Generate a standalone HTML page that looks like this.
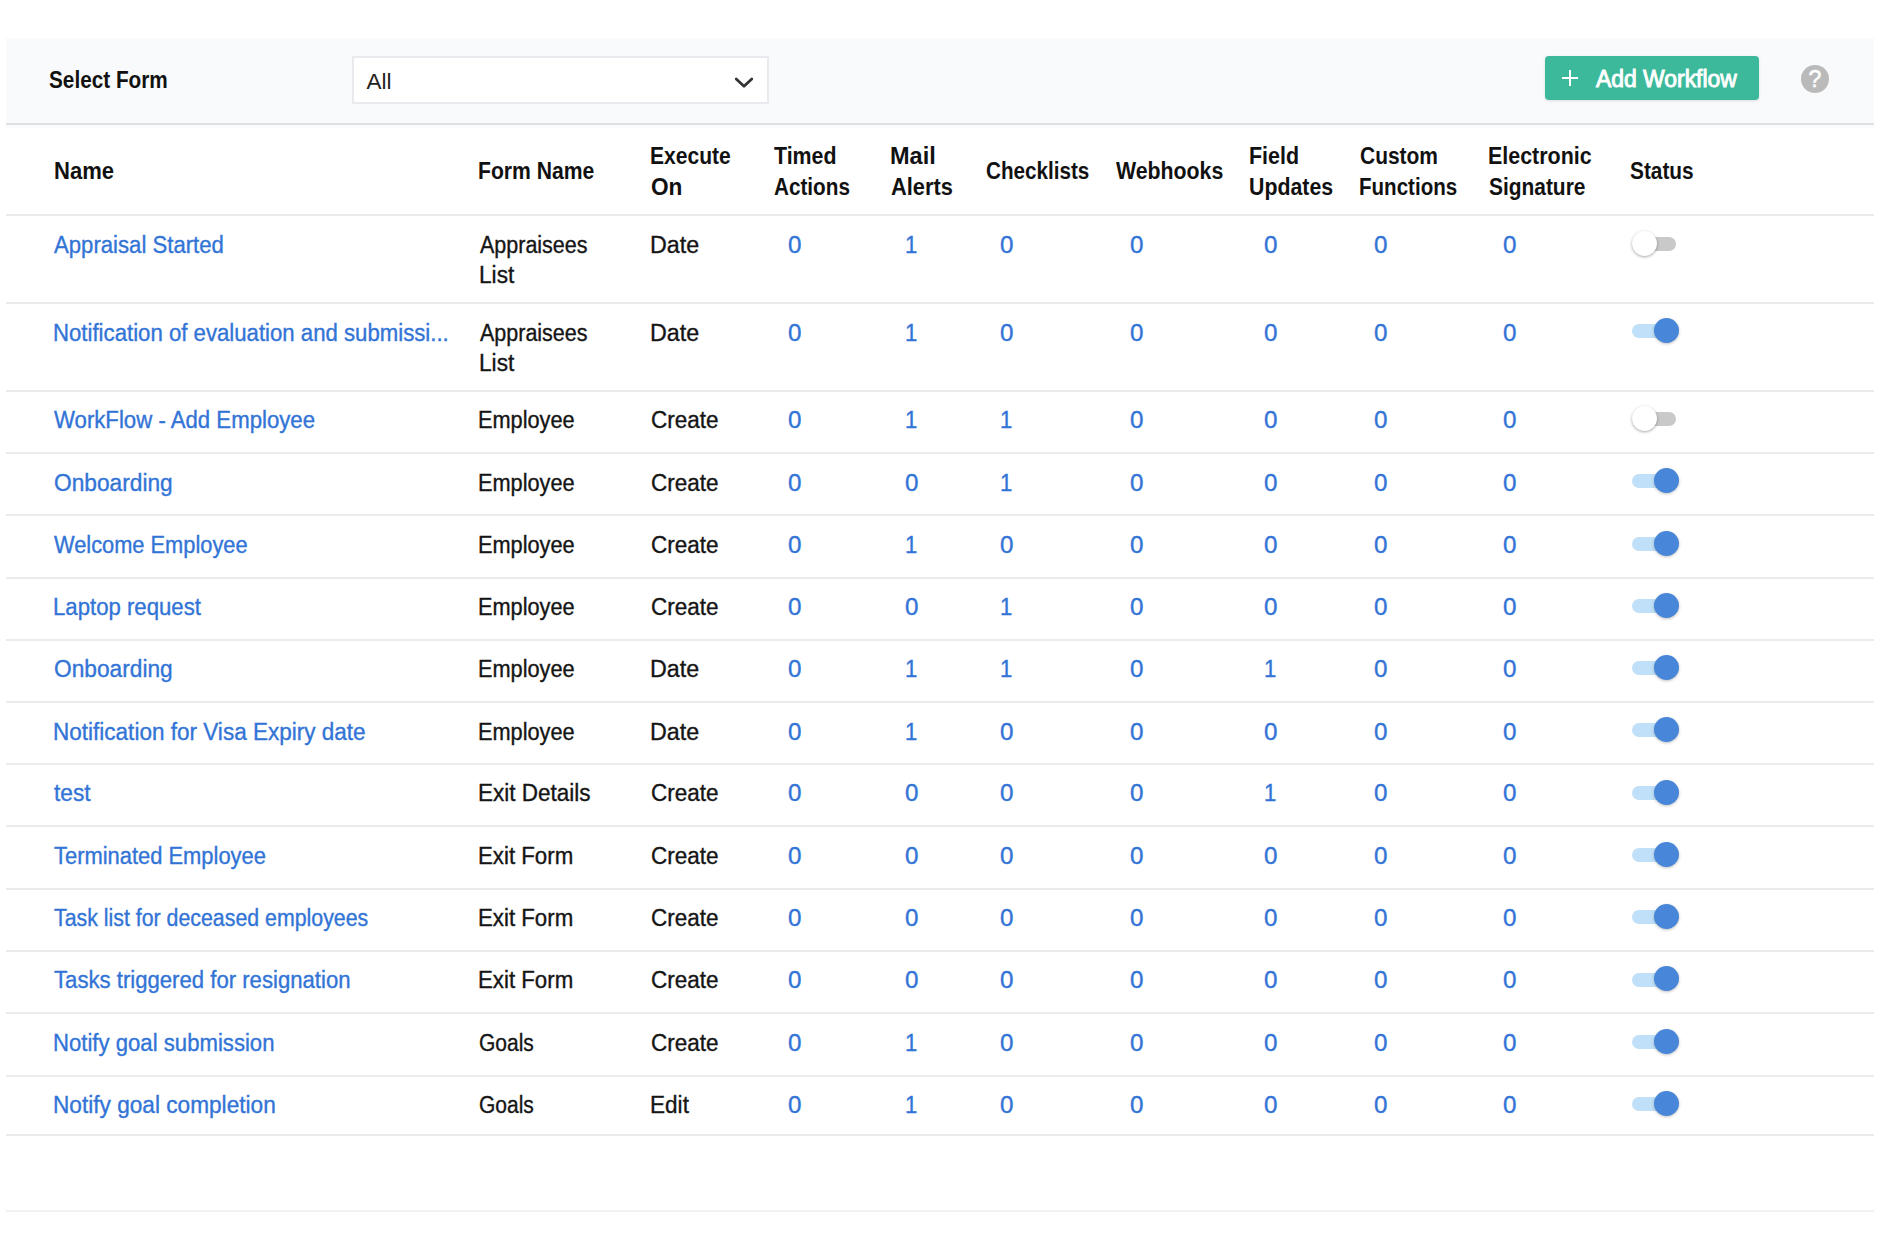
<!DOCTYPE html>
<html lang="en"><head><meta charset="utf-8"><title>Workflows</title>
<style>
html,body{margin:0;padding:0;background:#fff;}
body{width:1880px;height:1250px;position:relative;overflow:hidden;font-family:"Liberation Sans",Arial,sans-serif;font-size:23px;line-height:31px;color:#151515;}
.t{position:absolute;white-space:nowrap;transform-origin:0 0;line-height:31px;-webkit-text-stroke:0.35px currentColor;}
.b{font-weight:bold;color:#111;-webkit-text-stroke:0;}
.w{color:#fff;-webkit-text-stroke:0.9px #fff;}
a.t,.n{color:#3274d6;text-decoration:none;}
.bar{position:absolute;left:6px;top:38px;width:1868px;height:85px;background:#f9fafc;border-bottom:2px solid #e0e1e4;box-shadow:0 3px 0 #fafbfc;}
.sel{position:absolute;left:346px;top:18px;width:413px;height:44px;background:#fff;border:2px solid #e9eaed;}
.sel .v{position:absolute;left:12.5px;top:8px;font-size:22.5px;line-height:31px;color:#222;}
.sel svg{position:absolute;left:380px;top:19px;}
.btn{position:absolute;left:1539px;top:18px;width:214px;height:44px;border-radius:4px;background:#3cb99a;color:#fff;box-shadow:0 1px 3px rgba(0,0,0,.12);}
.btn svg{position:absolute;left:16px;top:13px;}
.help{position:absolute;left:1794.5px;top:26.7px;width:28.6px;height:28.6px;border-radius:50%;background:#bababa;color:#fff;font-size:23px;line-height:29px;text-align:center;-webkit-text-stroke:0.5px #fff;}
.tbl{position:absolute;left:6px;top:125px;width:1868px;}
.row{position:absolute;left:0;width:1868px;border-top:2px solid #ebebeb;box-sizing:border-box;}
.tg{position:absolute;left:1625.5px;width:44.5px;height:14px;border-radius:7px;background:#c9c9c9;}
.tg i{position:absolute;left:0;top:-6.2px;width:25px;height:25px;border-radius:50%;background:#fff;box-shadow:0 1px 3px rgba(0,0,0,.35);}
.tg.on{background:#bfe0f8;}
.tg.on i{left:22.5px;background:#4786d8;box-shadow:0 1px 3px rgba(0,0,0,.25);}
.foot{position:absolute;left:6px;top:1210px;width:1868px;height:2px;background:#f1f1f1;}
</style></head><body>

<div class="bar">
<span class="t b" style="left:43.00px;top:27.00px;transform:scaleX(0.9023)">Select Form</span>
<div class="sel"><span class="v">All</span><svg width="20" height="13" viewBox="0 0 20 13"><path d="M2.2 2 L10 9.3 L17.8 2" fill="none" stroke="#333" stroke-width="2.7" stroke-linecap="round" stroke-linejoin="round"/></svg></div>
<div class="btn"><svg width="18" height="18" viewBox="0 0 18 18"><path d="M9 1V17M1 9H17" stroke="#fff" stroke-width="2" fill="none"/></svg>
<span class="t w" style="left:51.00px;top:8.00px;transform:scaleX(0.9952)">Add Workflow</span>
</div>
<div class="help">?</div>
</div>
<div class="tbl">
<div class="hd">
<span class="t b" style="left:48.00px;top:31.00px;transform:scaleX(0.9591)">Name</span>
<span class="t b" style="left:472.00px;top:31.00px;transform:scaleX(0.9192)">Form Name</span>
<span class="t b" style="left:644.00px;top:16.00px;transform:scaleX(0.9162)">Execute</span>
<span class="t b" style="left:645.00px;top:47.00px;transform:scaleX(0.9833)">On</span>
<span class="t b" style="left:768.00px;top:16.00px;transform:scaleX(0.9289)">Timed</span>
<span class="t b" style="left:768.00px;top:47.00px;transform:scaleX(0.9000)">Actions</span>
<span class="t b" style="left:884.00px;top:16.00px;transform:scaleX(1.0216)">Mail</span>
<span class="t b" style="left:885.00px;top:47.00px;transform:scaleX(0.9485)">Alerts</span>
<span class="t b" style="left:980.00px;top:31.00px;transform:scaleX(0.8983)">Checklists</span>
<span class="t b" style="left:1110.00px;top:31.00px;transform:scaleX(0.9261)">Webhooks</span>
<span class="t b" style="left:1243.00px;top:16.00px;transform:scaleX(0.9315)">Field</span>
<span class="t b" style="left:1243.00px;top:47.00px;transform:scaleX(0.9270)">Updates</span>
<span class="t b" style="left:1354.00px;top:16.00px;transform:scaleX(0.9107)">Custom</span>
<span class="t b" style="left:1353.00px;top:47.00px;transform:scaleX(0.8935)">Functions</span>
<span class="t b" style="left:1482.00px;top:16.00px;transform:scaleX(0.9319)">Electronic</span>
<span class="t b" style="left:1483.00px;top:47.00px;transform:scaleX(0.9088)">Signature</span>
<span class="t b" style="left:1624.00px;top:31.00px;transform:scaleX(0.9058)">Status</span>
</div>
<div class="row" style="top:89.00px;height:88.00px">
<a class="t n" style="left:48.00px;top:14.00px;transform:scaleX(0.9629)">Appraisal Started</a>
<span class="t" style="left:474.00px;top:14.00px;transform:scaleX(0.9343)">Appraisees</span>
<span class="t" style="left:473.00px;top:44.00px;transform:scaleX(0.9856)">List</span>
<span class="t" style="left:644.00px;top:14.00px;transform:scaleX(1.0111)">Date</span>
<span class="t n" style="left:782.00px;top:14.00px;transform:scaleX(1.0522)">0</span>
<span class="t n" style="left:899.00px;top:14.00px;transform:scaleX(0.9617)">1</span>
<span class="t n" style="left:994.00px;top:14.00px;transform:scaleX(1.0522)">0</span>
<span class="t n" style="left:1124.00px;top:14.00px;transform:scaleX(1.0522)">0</span>
<span class="t n" style="left:1258.00px;top:14.00px;transform:scaleX(1.0522)">0</span>
<span class="t n" style="left:1368.00px;top:14.00px;transform:scaleX(1.0522)">0</span>
<span class="t n" style="left:1497.00px;top:14.00px;transform:scaleX(1.0522)">0</span>
<div class="tg" style="top:20.8px"><i></i></div>
</div>
<div class="row" style="top:177.00px;height:88.00px">
<a class="t n" style="left:47.00px;top:14.00px;transform:scaleX(0.9644)">Notification of evaluation and submissi...</a>
<span class="t" style="left:474.00px;top:14.00px;transform:scaleX(0.9343)">Appraisees</span>
<span class="t" style="left:473.00px;top:44.00px;transform:scaleX(0.9856)">List</span>
<span class="t" style="left:644.00px;top:14.00px;transform:scaleX(1.0111)">Date</span>
<span class="t n" style="left:782.00px;top:14.00px;transform:scaleX(1.0522)">0</span>
<span class="t n" style="left:899.00px;top:14.00px;transform:scaleX(0.9617)">1</span>
<span class="t n" style="left:994.00px;top:14.00px;transform:scaleX(1.0522)">0</span>
<span class="t n" style="left:1124.00px;top:14.00px;transform:scaleX(1.0522)">0</span>
<span class="t n" style="left:1258.00px;top:14.00px;transform:scaleX(1.0522)">0</span>
<span class="t n" style="left:1368.00px;top:14.00px;transform:scaleX(1.0522)">0</span>
<span class="t n" style="left:1497.00px;top:14.00px;transform:scaleX(1.0522)">0</span>
<div class="tg on" style="top:20.0px"><i></i></div>
</div>
<div class="row" style="top:265.00px;height:62.00px">
<a class="t n" style="left:48.00px;top:13.00px;transform:scaleX(0.9648)">WorkFlow - Add Employee</a>
<span class="t" style="left:472.00px;top:13.00px;transform:scaleX(0.9450)">Employee</span>
<span class="t" style="left:645.00px;top:13.00px;transform:scaleX(0.9779)">Create</span>
<span class="t n" style="left:782.00px;top:13.00px;transform:scaleX(1.0522)">0</span>
<span class="t n" style="left:899.00px;top:13.00px;transform:scaleX(0.9617)">1</span>
<span class="t n" style="left:994.00px;top:13.00px;transform:scaleX(0.9617)">1</span>
<span class="t n" style="left:1124.00px;top:13.00px;transform:scaleX(1.0522)">0</span>
<span class="t n" style="left:1258.00px;top:13.00px;transform:scaleX(1.0522)">0</span>
<span class="t n" style="left:1368.00px;top:13.00px;transform:scaleX(1.0522)">0</span>
<span class="t n" style="left:1497.00px;top:13.00px;transform:scaleX(1.0522)">0</span>
<div class="tg" style="top:20.1px"><i></i></div>
</div>
<div class="row" style="top:327.00px;height:62.00px">
<a class="t n" style="left:48.00px;top:14.00px;transform:scaleX(0.9874)">Onboarding</a>
<span class="t" style="left:472.00px;top:14.00px;transform:scaleX(0.9450)">Employee</span>
<span class="t" style="left:645.00px;top:14.00px;transform:scaleX(0.9779)">Create</span>
<span class="t n" style="left:782.00px;top:14.00px;transform:scaleX(1.0522)">0</span>
<span class="t n" style="left:899.00px;top:14.00px;transform:scaleX(1.0522)">0</span>
<span class="t n" style="left:994.00px;top:14.00px;transform:scaleX(0.9617)">1</span>
<span class="t n" style="left:1124.00px;top:14.00px;transform:scaleX(1.0522)">0</span>
<span class="t n" style="left:1258.00px;top:14.00px;transform:scaleX(1.0522)">0</span>
<span class="t n" style="left:1368.00px;top:14.00px;transform:scaleX(1.0522)">0</span>
<span class="t n" style="left:1497.00px;top:14.00px;transform:scaleX(1.0522)">0</span>
<div class="tg on" style="top:20.3px"><i></i></div>
</div>
<div class="row" style="top:389.00px;height:63.00px">
<a class="t n" style="left:48.00px;top:14.00px;transform:scaleX(0.9483)">Welcome Employee</a>
<span class="t" style="left:472.00px;top:14.00px;transform:scaleX(0.9450)">Employee</span>
<span class="t" style="left:645.00px;top:14.00px;transform:scaleX(0.9779)">Create</span>
<span class="t n" style="left:782.00px;top:14.00px;transform:scaleX(1.0522)">0</span>
<span class="t n" style="left:899.00px;top:14.00px;transform:scaleX(0.9617)">1</span>
<span class="t n" style="left:994.00px;top:14.00px;transform:scaleX(1.0522)">0</span>
<span class="t n" style="left:1124.00px;top:14.00px;transform:scaleX(1.0522)">0</span>
<span class="t n" style="left:1258.00px;top:14.00px;transform:scaleX(1.0522)">0</span>
<span class="t n" style="left:1368.00px;top:14.00px;transform:scaleX(1.0522)">0</span>
<span class="t n" style="left:1497.00px;top:14.00px;transform:scaleX(1.0522)">0</span>
<div class="tg on" style="top:20.7px"><i></i></div>
</div>
<div class="row" style="top:452.00px;height:62.00px">
<a class="t n" style="left:47.00px;top:13.00px;transform:scaleX(0.9638)">Laptop request</a>
<span class="t" style="left:472.00px;top:13.00px;transform:scaleX(0.9450)">Employee</span>
<span class="t" style="left:645.00px;top:13.00px;transform:scaleX(0.9779)">Create</span>
<span class="t n" style="left:782.00px;top:13.00px;transform:scaleX(1.0522)">0</span>
<span class="t n" style="left:899.00px;top:13.00px;transform:scaleX(1.0522)">0</span>
<span class="t n" style="left:994.00px;top:13.00px;transform:scaleX(0.9617)">1</span>
<span class="t n" style="left:1124.00px;top:13.00px;transform:scaleX(1.0522)">0</span>
<span class="t n" style="left:1258.00px;top:13.00px;transform:scaleX(1.0522)">0</span>
<span class="t n" style="left:1368.00px;top:13.00px;transform:scaleX(1.0522)">0</span>
<span class="t n" style="left:1497.00px;top:13.00px;transform:scaleX(1.0522)">0</span>
<div class="tg on" style="top:20.0px"><i></i></div>
</div>
<div class="row" style="top:514.00px;height:62.00px">
<a class="t n" style="left:48.00px;top:13.00px;transform:scaleX(0.9874)">Onboarding</a>
<span class="t" style="left:472.00px;top:13.00px;transform:scaleX(0.9450)">Employee</span>
<span class="t" style="left:644.00px;top:13.00px;transform:scaleX(1.0111)">Date</span>
<span class="t n" style="left:782.00px;top:13.00px;transform:scaleX(1.0522)">0</span>
<span class="t n" style="left:899.00px;top:13.00px;transform:scaleX(0.9617)">1</span>
<span class="t n" style="left:994.00px;top:13.00px;transform:scaleX(0.9617)">1</span>
<span class="t n" style="left:1124.00px;top:13.00px;transform:scaleX(1.0522)">0</span>
<span class="t n" style="left:1258.00px;top:13.00px;transform:scaleX(0.9617)">1</span>
<span class="t n" style="left:1368.00px;top:13.00px;transform:scaleX(1.0522)">0</span>
<span class="t n" style="left:1497.00px;top:13.00px;transform:scaleX(1.0522)">0</span>
<div class="tg on" style="top:20.0px"><i></i></div>
</div>
<div class="row" style="top:576.00px;height:62.00px">
<a class="t n" style="left:47.00px;top:14.00px;transform:scaleX(0.9795)">Notification for Visa Expiry date</a>
<span class="t" style="left:472.00px;top:14.00px;transform:scaleX(0.9450)">Employee</span>
<span class="t" style="left:644.00px;top:14.00px;transform:scaleX(1.0111)">Date</span>
<span class="t n" style="left:782.00px;top:14.00px;transform:scaleX(1.0522)">0</span>
<span class="t n" style="left:899.00px;top:14.00px;transform:scaleX(0.9617)">1</span>
<span class="t n" style="left:994.00px;top:14.00px;transform:scaleX(1.0522)">0</span>
<span class="t n" style="left:1124.00px;top:14.00px;transform:scaleX(1.0522)">0</span>
<span class="t n" style="left:1258.00px;top:14.00px;transform:scaleX(1.0522)">0</span>
<span class="t n" style="left:1368.00px;top:14.00px;transform:scaleX(1.0522)">0</span>
<span class="t n" style="left:1497.00px;top:14.00px;transform:scaleX(1.0522)">0</span>
<div class="tg on" style="top:20.3px"><i></i></div>
</div>
<div class="row" style="top:638.00px;height:62.00px">
<a class="t n" style="left:48.00px;top:13.00px;transform:scaleX(0.9868)">test</a>
<span class="t" style="left:472.00px;top:13.00px;transform:scaleX(0.9779)">Exit Details</span>
<span class="t" style="left:645.00px;top:13.00px;transform:scaleX(0.9779)">Create</span>
<span class="t n" style="left:782.00px;top:13.00px;transform:scaleX(1.0522)">0</span>
<span class="t n" style="left:899.00px;top:13.00px;transform:scaleX(1.0522)">0</span>
<span class="t n" style="left:994.00px;top:13.00px;transform:scaleX(1.0522)">0</span>
<span class="t n" style="left:1124.00px;top:13.00px;transform:scaleX(1.0522)">0</span>
<span class="t n" style="left:1258.00px;top:13.00px;transform:scaleX(0.9617)">1</span>
<span class="t n" style="left:1368.00px;top:13.00px;transform:scaleX(1.0522)">0</span>
<span class="t n" style="left:1497.00px;top:13.00px;transform:scaleX(1.0522)">0</span>
<div class="tg on" style="top:20.7px"><i></i></div>
</div>
<div class="row" style="top:700.00px;height:63.00px">
<a class="t n" style="left:48.00px;top:14.00px;transform:scaleX(0.9527)">Terminated Employee</a>
<span class="t" style="left:472.00px;top:14.00px;transform:scaleX(0.9674)">Exit Form</span>
<span class="t" style="left:645.00px;top:14.00px;transform:scaleX(0.9779)">Create</span>
<span class="t n" style="left:782.00px;top:14.00px;transform:scaleX(1.0522)">0</span>
<span class="t n" style="left:899.00px;top:14.00px;transform:scaleX(1.0522)">0</span>
<span class="t n" style="left:994.00px;top:14.00px;transform:scaleX(1.0522)">0</span>
<span class="t n" style="left:1124.00px;top:14.00px;transform:scaleX(1.0522)">0</span>
<span class="t n" style="left:1258.00px;top:14.00px;transform:scaleX(1.0522)">0</span>
<span class="t n" style="left:1368.00px;top:14.00px;transform:scaleX(1.0522)">0</span>
<span class="t n" style="left:1497.00px;top:14.00px;transform:scaleX(1.0522)">0</span>
<div class="tg on" style="top:20.9px"><i></i></div>
</div>
<div class="row" style="top:763.00px;height:62.00px">
<a class="t n" style="left:48.00px;top:13.00px;transform:scaleX(0.9275)">Task list for deceased employees</a>
<span class="t" style="left:472.00px;top:13.00px;transform:scaleX(0.9674)">Exit Form</span>
<span class="t" style="left:645.00px;top:13.00px;transform:scaleX(0.9779)">Create</span>
<span class="t n" style="left:782.00px;top:13.00px;transform:scaleX(1.0522)">0</span>
<span class="t n" style="left:899.00px;top:13.00px;transform:scaleX(1.0522)">0</span>
<span class="t n" style="left:994.00px;top:13.00px;transform:scaleX(1.0522)">0</span>
<span class="t n" style="left:1124.00px;top:13.00px;transform:scaleX(1.0522)">0</span>
<span class="t n" style="left:1258.00px;top:13.00px;transform:scaleX(1.0522)">0</span>
<span class="t n" style="left:1368.00px;top:13.00px;transform:scaleX(1.0522)">0</span>
<span class="t n" style="left:1497.00px;top:13.00px;transform:scaleX(1.0522)">0</span>
<div class="tg on" style="top:20.2px"><i></i></div>
</div>
<div class="row" style="top:825.00px;height:62.00px">
<a class="t n" style="left:48.00px;top:13.00px;transform:scaleX(0.9625)">Tasks triggered for resignation</a>
<span class="t" style="left:472.00px;top:13.00px;transform:scaleX(0.9674)">Exit Form</span>
<span class="t" style="left:645.00px;top:13.00px;transform:scaleX(0.9779)">Create</span>
<span class="t n" style="left:782.00px;top:13.00px;transform:scaleX(1.0522)">0</span>
<span class="t n" style="left:899.00px;top:13.00px;transform:scaleX(1.0522)">0</span>
<span class="t n" style="left:994.00px;top:13.00px;transform:scaleX(1.0522)">0</span>
<span class="t n" style="left:1124.00px;top:13.00px;transform:scaleX(1.0522)">0</span>
<span class="t n" style="left:1258.00px;top:13.00px;transform:scaleX(1.0522)">0</span>
<span class="t n" style="left:1368.00px;top:13.00px;transform:scaleX(1.0522)">0</span>
<span class="t n" style="left:1497.00px;top:13.00px;transform:scaleX(1.0522)">0</span>
<div class="tg on" style="top:20.6px"><i></i></div>
</div>
<div class="row" style="top:887.00px;height:63.00px">
<a class="t n" style="left:47.00px;top:14.00px;transform:scaleX(0.9626)">Notify goal submission</a>
<span class="t" style="left:473.00px;top:14.00px;transform:scaleX(0.9128)">Goals</span>
<span class="t" style="left:645.00px;top:14.00px;transform:scaleX(0.9779)">Create</span>
<span class="t n" style="left:782.00px;top:14.00px;transform:scaleX(1.0522)">0</span>
<span class="t n" style="left:899.00px;top:14.00px;transform:scaleX(0.9617)">1</span>
<span class="t n" style="left:994.00px;top:14.00px;transform:scaleX(1.0522)">0</span>
<span class="t n" style="left:1124.00px;top:14.00px;transform:scaleX(1.0522)">0</span>
<span class="t n" style="left:1258.00px;top:14.00px;transform:scaleX(1.0522)">0</span>
<span class="t n" style="left:1368.00px;top:14.00px;transform:scaleX(1.0522)">0</span>
<span class="t n" style="left:1497.00px;top:14.00px;transform:scaleX(1.0522)">0</span>
<div class="tg on" style="top:20.8px"><i></i></div>
</div>
<div class="row" style="top:950.00px;height:59.00px">
<a class="t n" style="left:47.00px;top:13.00px;transform:scaleX(0.9843)">Notify goal completion</a>
<span class="t" style="left:473.00px;top:13.00px;transform:scaleX(0.9128)">Goals</span>
<span class="t" style="left:644.00px;top:13.00px;transform:scaleX(0.9819)">Edit</span>
<span class="t n" style="left:782.00px;top:13.00px;transform:scaleX(1.0522)">0</span>
<span class="t n" style="left:899.00px;top:13.00px;transform:scaleX(0.9617)">1</span>
<span class="t n" style="left:994.00px;top:13.00px;transform:scaleX(1.0522)">0</span>
<span class="t n" style="left:1124.00px;top:13.00px;transform:scaleX(1.0522)">0</span>
<span class="t n" style="left:1258.00px;top:13.00px;transform:scaleX(1.0522)">0</span>
<span class="t n" style="left:1368.00px;top:13.00px;transform:scaleX(1.0522)">0</span>
<span class="t n" style="left:1497.00px;top:13.00px;transform:scaleX(1.0522)">0</span>
<div class="tg on" style="top:20.0px"><i></i></div>
</div>
<div class="row" style="top:1009.00px;height:2px"></div>
</div>
<div class="foot"></div>
</body></html>
